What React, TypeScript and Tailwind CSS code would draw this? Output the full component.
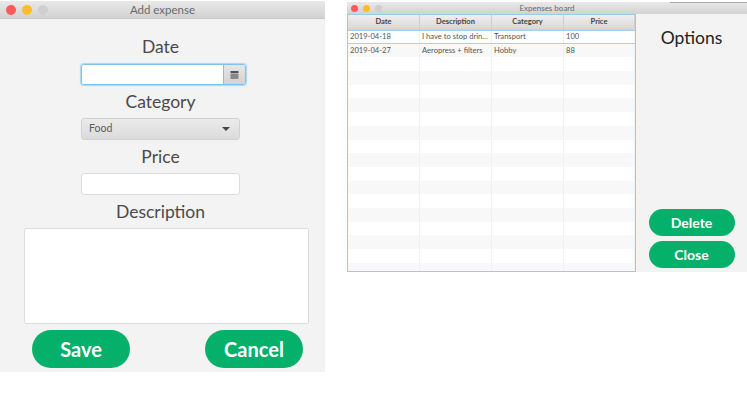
import React from 'react';

const rows = [
  { date: '2019-04-18', description: 'I have to stop drin...', category: 'Transport', price: '100' },
  { date: '2019-04-27', description: 'Aeropress + filters', category: 'Hobby', price: '88' },
  ...Array.from({ length: 16 }, () => ({ date: '', description: '', category: '', price: '' })),
];

const cols = ['w-[72px]', 'w-[72px]', 'w-[72px]', 'flex-1'];

const TrafficLights = ({ size, gap, last }: { size: string; gap: string; last: string }) => (
  <div className={`flex items-center ${gap}`}>
    <span className={`${size} rounded-full bg-[#fc5b57]`} />
    <span className={`${size} rounded-full bg-[#fdbb2e]`} />
    <span className={`${size} rounded-full ${last}`} />
  </div>
);

const Label = ({ children, className = '' }: { children: React.ReactNode; className?: string }) => (
  <div className={`text-[17.5px] leading-[22px] text-[#4a4a4a] text-center ${className}`}>{children}</div>
);

const GreenBtn = ({ children, className = '' }: { children: React.ReactNode; className?: string }) => (
  <button className={`bg-[#05b06a] text-white font-bold rounded-full flex items-center justify-center ${className}`}>
    {children}
  </button>
);

const AddExpense = () => (
  <div className="w-[325px] h-[371px] mt-px bg-[#f3f3f3] flex flex-col shrink-0">
    <div className="relative h-[18px] flex items-center pl-[6px] bg-gradient-to-b from-[#e9e9e9] to-[#d2d2d2] border-b border-[#c8c8c8]">
      <TrafficLights size="w-[10px] h-[10px]" gap="gap-[6px]" last="bg-[#cfcfcf]" />
      <div className="absolute inset-0 flex items-center justify-center text-[11.5px] text-[#6a6a6a]">Add expense</div>
    </div>
    <div className="flex flex-col items-center pr-[4px]">
      <Label className="mt-[17px]">Date</Label>
      <div className="w-[165px] h-[21px] mt-[6px] ml-[6px] flex rounded-[3px] border border-[#7fc2ea] shadow-[0_0_1px_1px_#a9d8f3] overflow-hidden">
        <div className="flex-1 bg-white border-r border-[#7fc2ea]" />
        <div className="w-[21px] bg-gradient-to-b from-[#e6e6e6] to-[#d3d3d3] flex items-center justify-center">
          <svg width="9" height="8" viewBox="0 0 9 8">
            <rect x="0.5" y="0" width="8" height="2" fill="#555" />
            <rect x="0.5" y="2.5" width="8" height="5.5" fill="#888" />
          </svg>
        </div>
      </div>
      <Label className="mt-[6px]">Category</Label>
      <div className="w-[159px] h-[22px] mt-[5px] flex items-center justify-between pl-[7px] pr-[9px] rounded-[3px] border border-[#d2d2d2] bg-gradient-to-b from-[#ebebeb] to-[#dbdbdb] text-[10.5px] text-[#5a5a5a]">
        <span>Food</span>
        <svg width="8" height="4" viewBox="0 0 8 4"><path d="M0 0h8L4 4z" fill="#444" /></svg>
      </div>
      <Label className="mt-[6px]">Price</Label>
      <div className="w-[159px] h-[22px] mt-[5px] bg-white rounded-[3px] border border-[#dcdcdc]" />
      <Label className="mt-[6px]">Description</Label>
      <div className="w-[285px] h-[96px] mt-[5px] ml-[11px] bg-white rounded-[2px] border border-[#dcdcdc]" />
      <div className="w-full flex justify-between pl-[32px] pr-[18px] mt-[6px]">
        <GreenBtn className="w-[98px] h-[38px] text-[20px]">Save</GreenBtn>
        <GreenBtn className="w-[98px] h-[38px] text-[20px]">Cancel</GreenBtn>
      </div>
    </div>
  </div>
);

const Board = () => (
  <div className="w-[400px] h-[270px] mt-[2px] ml-[22px] bg-[#f3f3f3] flex flex-col shrink-0">
    <div className="relative h-[12px] flex items-center pl-[4px] bg-gradient-to-b from-[#e9e9e9] to-[#d2d2d2]">
      <TrafficLights size="w-[7px] h-[7px]" gap="gap-[5px]" last="bg-[#cfcfcf]" />
      <div className="absolute inset-0 flex items-center justify-center text-[8px] text-[#6a6a6a]">Expenses board</div>
      <div className="absolute right-0 top-0 w-[77px] h-px bg-[#a8a8a8]" />
    </div>
    <div className="flex-1 flex min-h-0">
      <div className="w-[289px] border border-[#9ccbe8] overflow-hidden bg-white flex flex-col">
        <div className="h-[15px] shrink-0 flex bg-gradient-to-b from-[#efefef] to-[#d8d8d8] border-b border-[#d0d0d0]">
          {['Date', 'Description', 'Category', 'Price'].map((h, i) => (
            <div key={h} className={`${cols[i]} flex items-center justify-center text-[7.5px] font-bold text-[#444] border-r border-[#cfcfcf]`}>
              {h}
            </div>
          ))}
        </div>
        {rows.map((r, i) => (
          <div
            key={i}
            className={`h-[13.7px] shrink-0 flex text-[7.6px] text-[#555] ${i % 2 ? 'bg-[#f8f8f8]' : 'bg-white'} ${i === 0 ? 'border-y border-[#a5d3ee]' : ''}`}
          >
            {[r.date, r.description, r.category, r.price].map((v, j) => (
              <div key={j} className={`${cols[j]} flex items-center pl-[2px] border-r border-[#f1f1f1] whitespace-nowrap overflow-hidden`}>
                {v}
              </div>
            ))}
          </div>
        ))}
      </div>
      <div className="flex-1 flex flex-col items-center">
        <div className="text-[17.5px] leading-[22px] text-[#222] mt-[13px]">Options</div>
        <div className="mt-auto mb-[4px] flex flex-col gap-[5px]">
          <GreenBtn className="w-[86px] h-[27px] text-[14px]">Delete</GreenBtn>
          <GreenBtn className="w-[86px] h-[27px] text-[14px]">Close</GreenBtn>
        </div>
      </div>
    </div>
  </div>
);

export default function App() {
  return (
    <div className="w-[747px] h-[400px] bg-white flex items-start overflow-hidden font-['Lato',sans-serif]">
      <AddExpense />
      <Board />
    </div>
  );
}
